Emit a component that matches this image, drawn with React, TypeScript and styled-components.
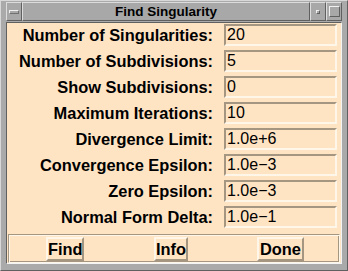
import React from "react";
import styled, { createGlobalStyle } from "styled-components";

const Global = createGlobalStyle`
  html, body {
    margin: 0;
    padding: 0;
    background: #a8a8a8;
  }
`;

const Frame = styled.div`
  width: 348px;
  height: 271px;
  box-sizing: border-box;
  background: #aaaaaa;
  display: flex;
  flex-direction: column;
  font-family: "Liberation Sans", Arial, sans-serif;
  border-top: 1px solid #d8d8d8;
  border-left: 1px solid #d8d8d8;
  border-right: 1px solid #606060;
  border-bottom: 1px solid #606060;
`;

const TitleBar = styled.div`
  height: 19px;
  margin: 1px 5px 0 5px;
  display: flex;
`;

const TitleButton = styled.div`
  width: 16px;
  box-sizing: border-box;
  background: #a8a8a8;
  border-top: 1px solid #dcdcdc;
  border-left: 1px solid #dcdcdc;
  border-right: 1px solid #606060;
  border-bottom: 1px solid #606060;
  display: flex;
  align-items: center;
  justify-content: center;
`;

const MinBar = styled.div`
  width: 8px;
  height: 2px;
  border-top: 1px solid #f0f0f0;
  border-left: 1px solid #f0f0f0;
  border-right: 1px solid #707070;
  border-bottom: 1px solid #707070;
`;

const Dot = styled.div`
  width: 2px;
  height: 2px;
  border-top: 1px solid #f0f0f0;
  border-left: 1px solid #f0f0f0;
  border-right: 1px solid #606060;
  border-bottom: 1px solid #606060;
`;

const MaxBox = styled.div`
  width: 9px;
  height: 9px;
  border-top: 1px solid #f0f0f0;
  border-left: 1px solid #f0f0f0;
  border-right: 1px solid #606060;
  border-bottom: 1px solid #606060;
`;

const Title = styled.div`
  flex: 1;
  box-sizing: border-box;
  background: #a8a8a8;
  border-top: 1px solid #dcdcdc;
  border-left: 1px solid #dcdcdc;
  border-right: 1px solid #606060;
  border-bottom: 1px solid #606060;
  text-align: center;
  font-weight: bold;
  font-size: 13.5px;
  line-height: 17px;
  color: #000;
`;

const Body = styled.div`
  flex: 1;
  margin: 1px 5px 8px 5px;
  background: #ffe4c4;
  border-top: 1px solid #606060;
  border-left: 1px solid #606060;
  border-right: 1px solid #f4f4f4;
  border-bottom: 1px solid #f4f4f4;
  display: flex;
  flex-direction: column;
  padding-top: 1px;
`;

const Row = styled.div`
  height: 26px;
  display: flex;
  align-items: flex-start;
`;

const Label = styled.div`
  width: 206px;
  text-align: right;
  font-weight: bold;
  font-size: 16.4px;
  line-height: 22px;
  color: #000;
  white-space: nowrap;
`;

const Field = styled.div`
  margin-left: 11px;
  width: 113px;
  height: 22px;
  box-sizing: border-box;
  border-top: 2px solid #a59682;
  border-left: 2px solid #a59682;
  border-right: 2px solid #fff6ea;
  border-bottom: 2px solid #fff6ea;
  padding-left: 1px;
  font-size: 16px;
  line-height: 18px;
  color: #000;
`;

const ButtonPanel = styled.div`
  margin: 2px 1px 0 1px;
  height: 29px;
  box-sizing: border-box;
  border-top: 1px solid #a59682;
  border-left: 1px solid #a59682;
  border-right: 1px solid #fff6ea;
  border-bottom: 1px solid #fff6ea;
  box-shadow: inset 1px 1px 0 #fff6ea, inset -1px -1px 0 #a59682;
  display: flex;
  align-items: center;
`;

const Button = styled.div<{ $left: number; $width: number }>`
  margin-left: ${(p) => p.$left}px;
  width: ${(p) => p.$width}px;
  height: 24px;
  box-sizing: border-box;
  border-top: 2px solid #fff6ea;
  border-left: 2px solid #fff6ea;
  border-right: 2px solid #a59682;
  border-bottom: 2px solid #a59682;
  font-weight: bold;
  font-size: 16.4px;
  line-height: 20px;
  text-align: center;
  color: #000;
  white-space: nowrap;
`;

const fields: [string, string][] = [
  ["Number of Singularities:", "20"],
  ["Number of Subdivisions:", "5"],
  ["Show Subdivisions:", "0"],
  ["Maximum Iterations:", "10"],
  ["Divergence Limit:", "1.0e+6"],
  ["Convergence Epsilon:", "1.0e\u22123"],
  ["Zero Epsilon:", "1.0e\u22123"],
  ["Normal Form Delta:", "1.0e\u22121"],
];

export default function App(): JSX.Element {
  return (
    <>
      <Global />
      <Frame>
        <TitleBar>
          <TitleButton>
            <MinBar />
          </TitleButton>
          <Title>Find Singularity</Title>
          <TitleButton>
            <Dot />
          </TitleButton>
          <TitleButton>
            <MaxBox />
          </TitleButton>
        </TitleBar>
        <Body>
          {fields.map(([label, value]) => (
            <Row key={label}>
              <Label>{label}</Label>
              <Field>{value}</Field>
            </Row>
          ))}
          <ButtonPanel>
            <Button $left={37} $width={38}>Find</Button>
            <Button $left={70} $width={34}>Info</Button>
            <Button $left={69} $width={47}>Done</Button>
          </ButtonPanel>
        </Body>
      </Frame>
    </>
  );
}
